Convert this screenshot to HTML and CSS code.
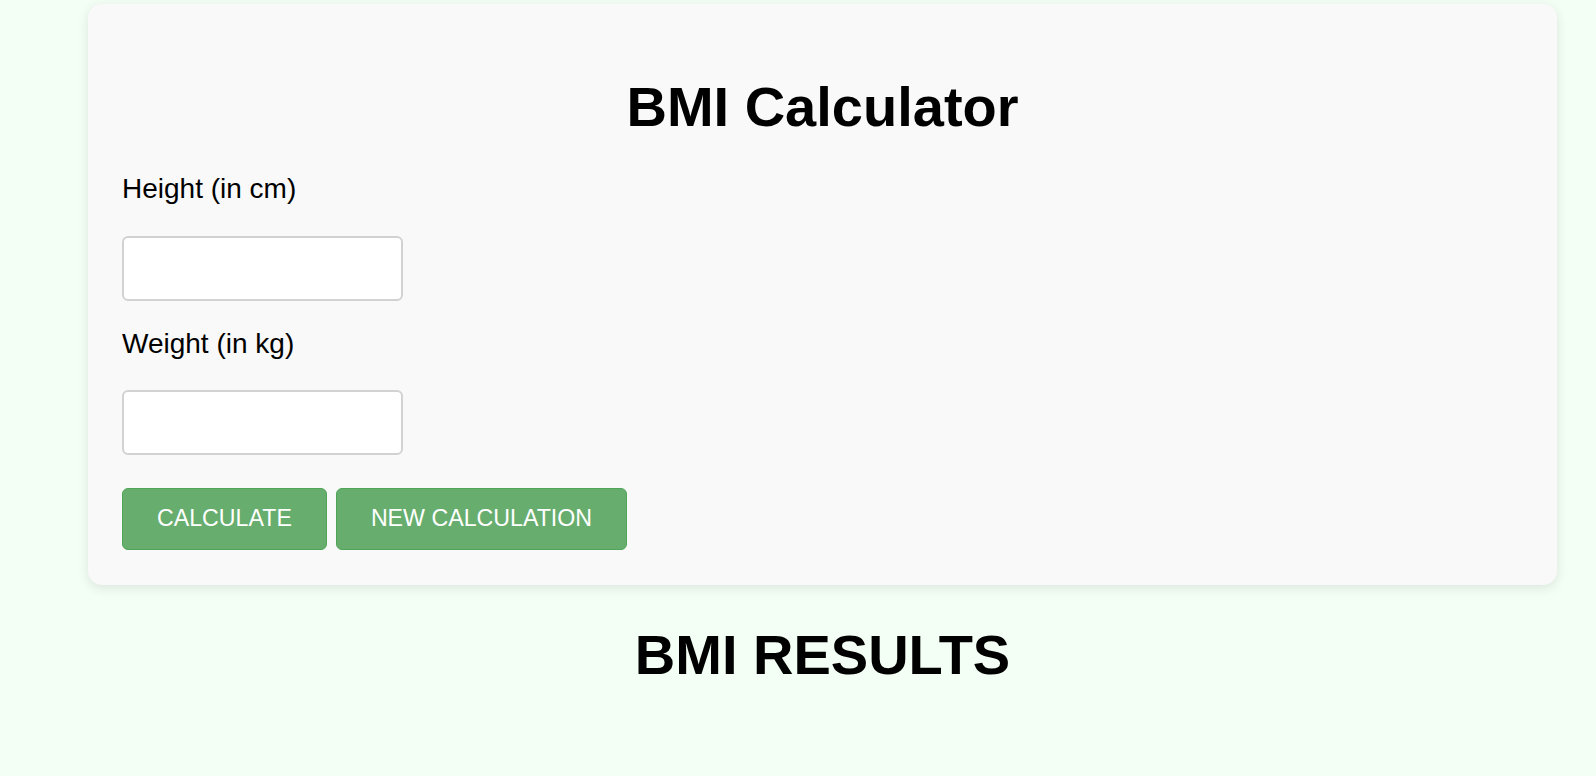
FILE: index.html
```html
<!DOCTYPE html>
<html lang="en">
<head>
<meta charset="utf-8">
<title>BMI Calculator</title>
<link rel="stylesheet" href="styles.css">
</head>
<body>
<div class="page">
  <div class="card">
    <h1 class="title">BMI Calculator</h1>
    <form class="form">
      <label class="label" for="height">Height (in cm)</label>
      <input class="input input-first" id="height" type="text">
      <label class="label" for="weight">Weight (in kg)</label>
      <input class="input" id="weight" type="text">
      <div class="actions">
        <button type="button" class="btn">CALCULATE</button>
        <button type="button" class="btn">NEW CALCULATION</button>
      </div>
    </form>
  </div>
  <h2 class="results">BMI RESULTS</h2>
</div>
</body>
</html>
```
FILE: styles.css
```css
html, body {
  margin: 0;
  padding: 0;
}
body {
  background: #f3fff4;
  font-family: "Liberation Sans", Arial, sans-serif;
  color: #000;
}
.page {
  margin: 4px 39px 0 88px;
}
.card {
  background: #f9f9f9;
  border-radius: 14px;
  padding: 34px 34px 35px;
  box-shadow: 0 3px 12px rgba(0, 0, 0, 0.1);
}
.title {
  margin: 37px 0 34px;
  font-size: 56px;
  line-height: 64px;
  font-weight: 700;
  text-align: center;
}
.form {
  display: flex;
  flex-direction: column;
  align-items: flex-start;
}
.label {
  display: block;
  font-size: 28px;
  line-height: 32px;
  margin-bottom: 30.5px;
  color: #000;
}
.input {
  box-sizing: border-box;
  width: 281px;
  height: 65px;
  margin: 0;
  border: 2px solid #d2d2d2;
  border-radius: 6px;
  background: #fff;
  font: 28px "Liberation Sans", Arial, sans-serif;
  padding: 0 14px;
}
.input-first {
  margin-bottom: 27px;
}
.actions {
  display: flex;
  gap: 9px;
  margin-top: 32.5px;
}
.btn {
  font: 23.2px "Liberation Sans", Arial, sans-serif;
  line-height: 25px;
  padding: 17.5px 34px;
  background: #66ad6e;
  color: #fff;
  border: 1px solid #4fa557;
  border-radius: 6px;
  cursor: pointer;
}
.results {
  margin: 38px 0 0;
  font-size: 56px;
  line-height: 64px;
  font-weight: 700;
  text-align: center;
}
```
